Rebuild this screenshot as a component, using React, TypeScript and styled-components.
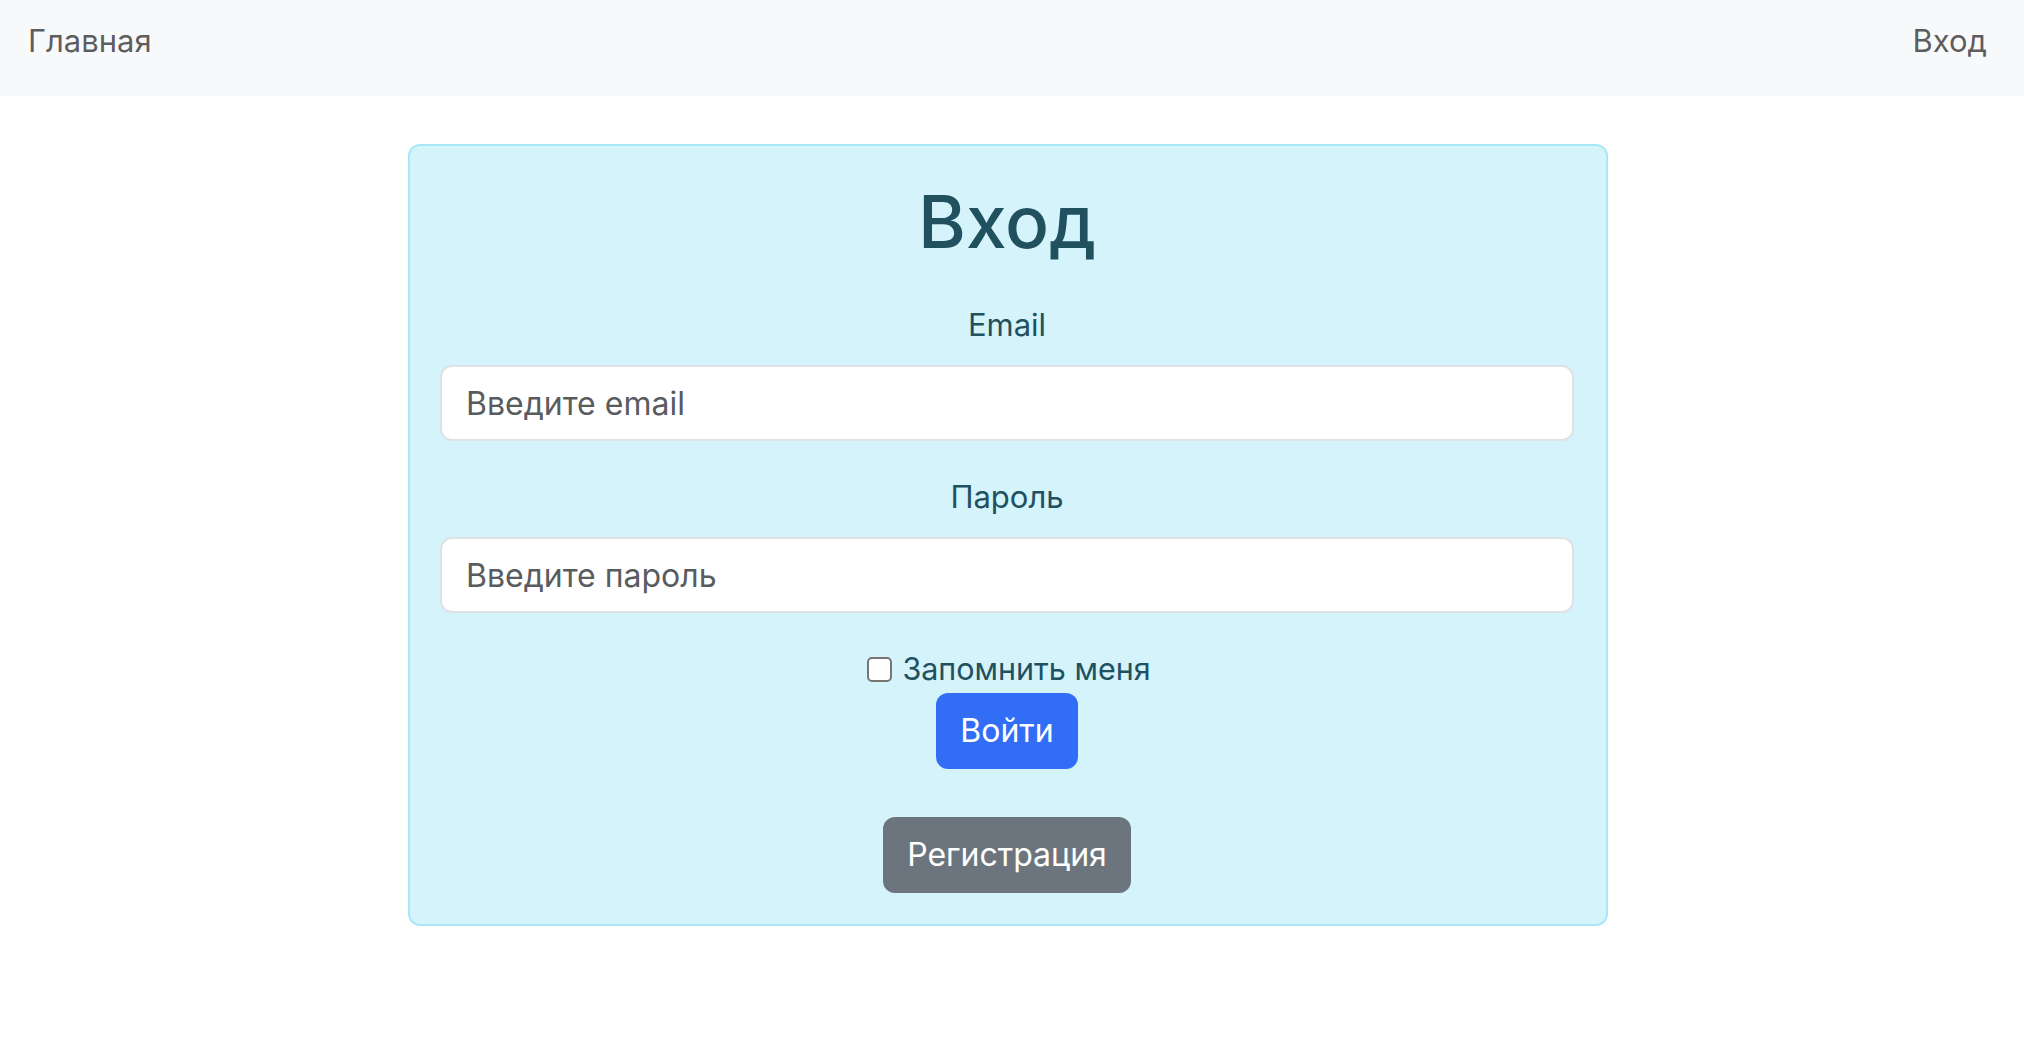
import React from "react";
import styled, { createGlobalStyle } from "styled-components";

const Global = createGlobalStyle`
  html, body { margin: 0; padding: 0; background: #ffffff; }
  body { font-family: Inter, "Noto Sans", sans-serif; }
  * { box-sizing: border-box; }
`;

const NavBar = styled.nav`
  height: 96px;
  background: #f8f9fa;
  display: flex;
  justify-content: space-between;
  align-items: flex-start;
  padding: 17px 37px 0 28px;
`;

const NavLink = styled.a`
  font-size: 31px;
  line-height: 48px;
  color: rgba(0, 0, 0, 0.65);
  text-decoration: none;
`;

const Main = styled.main`
  display: flex;
  justify-content: center;
  padding: 48px 8px 0 0;
`;

const Card = styled.form`
  width: 1200px;
  background: #d5f3fb;
  border: 2px solid #a8e7f6;
  border-radius: 12px;
  padding: 30px 32px 31px 30px;
  color: #21505e;
  display: flex;
  flex-direction: column;
  align-items: center;
`;

const Title = styled.h1`
  margin: 0 0 33px;
  font-size: 73px;
  line-height: 92px;
  font-weight: 500;
`;

const Field = styled.div`
  width: 100%;
  display: flex;
  flex-direction: column;
  align-items: center;
  margin-bottom: 32px;
`;

const Label = styled.label`
  font-size: 31px;
  line-height: 48px;
  margin-bottom: 16px;
`;

const Input = styled.input`
  width: 100%;
  height: 76px;
  border: 2px solid #dee2e6;
  border-radius: 12px;
  background: #fff;
  padding: 12px 24px;
  font-family: inherit;
  font-size: 32px;
  color: #212529;
  outline: none;
  &::placeholder { color: #595c5f; }
`;

const CheckRow = styled.label`
  display: flex;
  align-items: center;
  gap: 10px;
  font-size: 30.5px;
  line-height: 48px;
  padding-left: 4px;
`;

const Box = styled.span`
  width: 25px;
  height: 25px;
  border: 2px solid #767676;
  border-radius: 5px;
  background: #fff;
  display: inline-block;
`;

const Button = styled.button<{ $variant: "primary" | "secondary" }>`
  height: 76px;
  padding: 0 24px;
  border: none;
  border-radius: 12px;
  font-family: inherit;
  font-size: 32px;
  line-height: 48px;
  color: #fff;
  background: ${(p) => (p.$variant === "primary" ? "#316ef5" : "#6c757d")};
  cursor: pointer;
`;

const Spacer = styled.div`
  height: 48px;
`;

export default function App() {
  return (
    <>
      <Global />
      <NavBar>
        <NavLink href="#">Главная</NavLink>
        <NavLink href="#">Вход</NavLink>
      </NavBar>
      <Main>
        <Card onSubmit={(e) => e.preventDefault()}>
          <Title>Вход</Title>
          <Field>
            <Label htmlFor="email">Email</Label>
            <Input id="email" type="email" placeholder="Введите email" />
          </Field>
          <Field>
            <Label htmlFor="password">Пароль</Label>
            <Input id="password" type="password" placeholder="Введите пароль" />
          </Field>
          <CheckRow>
            <Box />
            Запомнить меня
          </CheckRow>
          <Button $variant="primary" type="submit">Войти</Button>
          <Spacer />
          <Button $variant="secondary" type="button">Регистрация</Button>
        </Card>
      </Main>
    </>
  );
}
